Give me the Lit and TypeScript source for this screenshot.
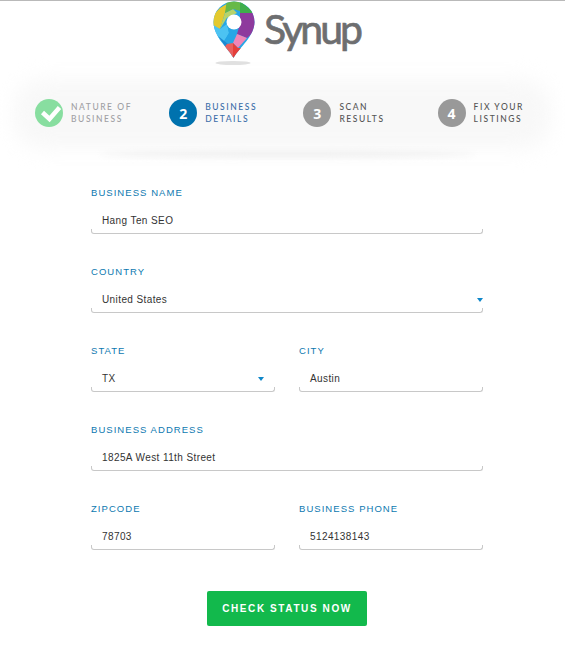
import { LitElement, html, css, svg } from "lit";
import { customElement } from "lit/decorators.js";

const steps = [
  { label: ["NATURE OF", "BUSINESS"], n: "", cls: "done" },
  { label: ["BUSINESS", "DETAILS"], n: "2", cls: "active" },
  { label: ["SCAN", "RESULTS"], n: "3", cls: "todo" },
  { label: ["FIX YOUR", "LISTINGS"], n: "4", cls: "todo" },
];

const pinPieces: [string, string][] = [
  ["#e3c92f", "7,7 15.300,2 12,12 7,28 -1,25 -1,15"],
  ["#b6d36b", "12,12 20,8 24,12 13.700,17 7,28"],
  ["#67b947", "13.700,0 30,0 27,10 20,8 12,12"],
  ["#3fae4b", "27,0 42,12 27,12"],
  ["#8e3a9d", "27,12 44,12 44,28 34,37 24,33 27,23"],
  ["#4cc3f2", "-1,23 7,28 14,23 16,32 9,43 -1,32"],
  ["#27a6e6", "16,32 14,23 24,24 24,33 20,42 10,43"],
  ["#1e88d0", "5,35 15,43 14,48"],
  ["#f185b7", "24,33 34,37 25,47 20,42"],
  ["#e8605f", "14,43 20,42 20,57 10,48"],
  ["#e53f3a", "20,42 25,47 32,47 20,57"],
];

const logoPin = svg`
  <defs>
    <clipPath id="pin"><path d="M20.500 57C14 46 .5 35 .5 21A20.500 20.500 0 0 1 41.500 21C41.500 35 27 46 20.500 57Z"/></clipPath>
  </defs>
  <g clip-path="url(#pin)">
    <rect x="0" y="0" width="42" height="58" fill="#27a6e6"/>
    ${pinPieces.map(([c, p]) => svg`<polygon points=${p} fill=${c}/>`)}
  </g>
  <circle cx="21" cy="21" r="7.500" fill="#fff"/>
  <ellipse cx="20" cy="62" rx="17.500" ry="2" fill="#e0e0e0"/>
`;

@customElement("app-root")
export class AppRoot extends LitElement {
  static styles = css`
    :host {
      display: block;
      width: 565px;
      height: 649px;
      background: #fff;
      border-top: 1px solid #b9b9b9;
      box-sizing: border-box;
      overflow: hidden;
      font-family: "Liberation Sans", sans-serif;
    }
    .logo {
      display: flex;
      align-items: flex-start;
      gap: 9px;
      height: 74px;
      padding-left: 213px;
    }
    .logo svg {
      display: block;
      width: 42px;
      height: 66px;
      flex: none;
    }
    .word {
      font-family: Lato, sans-serif;
      font-size: 41px;
      line-height: 56px;
      letter-spacing: -3px;
      color: #6d6e70;
      -webkit-text-stroke: 0.7px #6d6e70;
    }
    .band {
      position: relative;
      height: 76px;
      display: flex;
      align-items: center;
      padding-left: 35px;
    }
    .band::after {
      content: "";
      position: absolute;
      left: 100px;
      right: 90px;
      bottom: -6px;
      height: 7px;
      background: #ececec;
      border-radius: 50%;
      filter: blur(3px);
    }
    .band::before {
      content: "";
      position: absolute;
      inset: 4px 14px 2px;
      z-index: 1;
      background: #f8f8f8;
      border-radius: 30px;
      filter: blur(10px);
    }
    .step {
      position: relative;
      z-index: 2;
      width: 134.200px;
      flex: none;
      display: flex;
      align-items: center;
      gap: 8px;
    }
    .circle {
      width: 28px;
      height: 28px;
      border-radius: 50%;
      flex: none;
      display: flex;
      align-items: center;
      justify-content: center;
      color: #fff;
      font: 700 14px "Noto Sans", sans-serif;
    }
    .circle svg { display: block; }
    .done .circle { background: #88dea0; }
    .active .circle { background: #0072ae; }
    .todo .circle { background: #999; }
    .text {
      font: 500 8.500px/12px Lato, sans-serif;
      letter-spacing: 1.550px;
    }
    .done .text { color: #a0a0a4; }
    .active .text { color: #3b6ea8; }
    .todo .text { color: #555; }
    form {
      display: grid;
      grid-template-columns: 184px 184px;
      column-gap: 24px;
      row-gap: 32px;
      margin: 0 0 0 91px;
      padding-top: 36px;
    }
    .field { display: flex; flex-direction: column; }
    .wide { grid-column: 1 / span 2; }
    .field label {
      font-size: 9.500px;
      line-height: 12px;
      letter-spacing: 1.050px;
      color: #0d79b0;
    }
    .input {
      height: 35px;
      box-sizing: border-box;
      padding: 15px 11px 0;
      font-size: 10px;
      line-height: 14px;
      letter-spacing: 0.400px;
      color: #333;
      position: relative;
    }
    .input::after {
      content: "";
      position: absolute;
      left: 0;
      right: 0;
      bottom: 0;
      height: 5px;
      box-sizing: border-box;
      border: 1px solid #c8c8c8;
      border-top: 0;
      border-radius: 0 0 3px 3px;
    }
    .caret {
      position: absolute;
      right: 0;
      top: 20px;
      width: 0;
      height: 0;
      border-left: 3.500px solid transparent;
      border-right: 3.500px solid transparent;
      border-top: 4px solid #0f87c9;
    }
    .half .caret { right: 11px; }
    .actions {
      display: flex;
      justify-content: center;
      padding: 41px 0 0 9px;
    }
    button {
      width: 160px;
      height: 35px;
      border: 0;
      border-radius: 2px;
      background: #12b94c;
      color: #fff;
      font: 700 10px "Liberation Sans", sans-serif;
      letter-spacing: 1.600px;
      padding: 0;
    }
  `;

  private field(label: string, value: string, opts: { wide?: boolean; select?: boolean } = {}) {
    return html`<div class="field ${opts.wide ? "wide" : "half"}">
      <label>${label}</label>
      <div class="input">${value}${opts.select ? html`<span class="caret"></span>` : ""}</div>
    </div>`;
  }

  render() {
    return html`
      <div class="logo">
        <svg viewBox="0 0 42 66" aria-hidden="true">${logoPin}</svg>
        <span class="word">Synup</span>
      </div>
      <div class="band">
        ${steps.map(
          (s) => html`<div class="step ${s.cls}">
            <div class="circle">
              ${s.n
                ? s.n
                : html`<svg width="28" height="28" viewBox="0 0 28 28"><path d="M7.500 13.500l7 6.500 10-11.500" fill="none" stroke="#fff" stroke-width="4.500"/></svg>`}
            </div>
            <div class="text">${s.label[0]}<br />${s.label[1]}</div>
          </div>`
        )}
      </div>
      <form>
        ${this.field("BUSINESS NAME", "Hang Ten SEO", { wide: true })}
        ${this.field("COUNTRY", "United States", { wide: true, select: true })}
        ${this.field("STATE", "TX", { select: true })}
        ${this.field("CITY", "Austin")}
        ${this.field("BUSINESS ADDRESS", "1825A West 11th Street", { wide: true })}
        ${this.field("ZIPCODE", "78703")}
        ${this.field("BUSINESS PHONE", "5124138143")}
      </form>
      <div class="actions"><button type="button">CHECK STATUS NOW</button></div>
    `;
  }
}
